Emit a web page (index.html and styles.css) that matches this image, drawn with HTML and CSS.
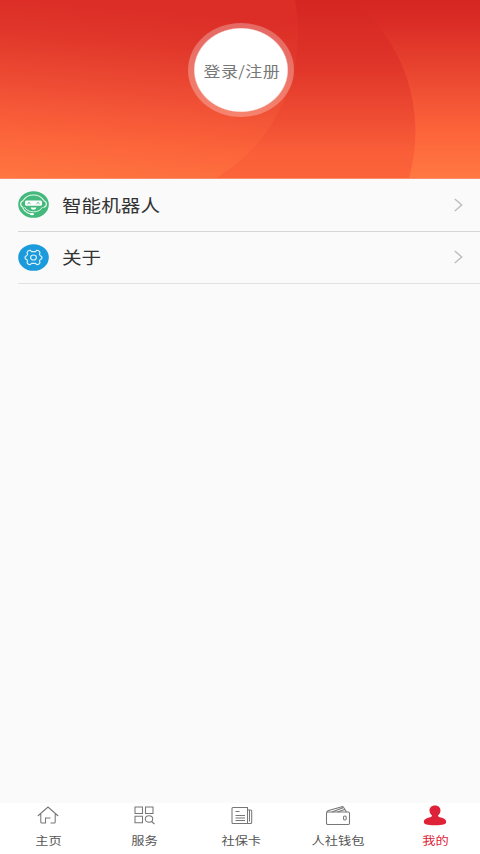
FILE: index.html
```html
<!DOCTYPE html>
<html lang="zh-CN">
<head>
<meta charset="utf-8">
<title>我的</title>
<link rel="stylesheet" href="styles.css">
</head>
<body>
<header class="banner">
  <svg class="waves" viewBox="0 0 480 178" preserveAspectRatio="none" aria-hidden="true">
    <defs>
      <linearGradient id="base" gradientUnits="userSpaceOnUse" x1="0" y1="0" x2="0" y2="178"><stop offset="0" stop-color="#d52622"/><stop offset=".12" stop-color="#da2b25"/><stop offset=".45" stop-color="#ec4a32"/><stop offset=".75" stop-color="#fd653a"/><stop offset="1" stop-color="#ff7842"/></linearGradient>
      <linearGradient id="mid" gradientUnits="userSpaceOnUse" x1="0" y1="0" x2="0" y2="178"><stop offset="0" stop-color="#d52622"/><stop offset=".35" stop-color="#df3429"/><stop offset=".7" stop-color="#f15034"/><stop offset=".85" stop-color="#f95e38"/><stop offset="1" stop-color="#fc643a"/></linearGradient>
      <linearGradient id="left" gradientUnits="userSpaceOnUse" x1="14" y1="0" x2="0" y2="178"><stop offset="0" stop-color="#dc2e27"/><stop offset=".2" stop-color="#e1382b"/><stop offset=".5" stop-color="#f05035"/><stop offset=".75" stop-color="#fc643a"/><stop offset="1" stop-color="#ff7641"/></linearGradient>
    </defs>
    <path fill="url(#base)" d="M0 0h480v178H0z"/>
    <path fill="url(#mid)" d="M0 0H353A165 168 0 0 1 409 178H0z"/>
    <path fill="url(#left)" d="M0 0H295A165 168 0 0 1 216 178H0z"/>
  </svg>
  <a class="avatar"><span class="avatar-text">登录/注册</span></a>
</header>
<main class="menu">
  <a class="row">
    <svg class="badge" viewBox="0 0 31 27" aria-hidden="true">
      <ellipse cx="15.5" cy="13.5" rx="15.3" ry="13.3" fill="#43b97c"/>
      <g fill="none" stroke="#e9f8ef" stroke-width="1.2">
        <path d="M5.2 9.5Q8.5 4 15.5 4t10.3 5.5"/>
        <path d="M5.5 9.5Q2.6 10.5 2.6 13t2.9 3.5M25.5 9.5q2.9 1 2.9 3.5t-2.9 3.5M4.8 17Q7.5 21.8 13 23"/>
        <path d="M6.5 16Q9 20.8 15.5 20.8T24.5 16" stroke-width=".9"/>
      </g>
      <rect x="7" y="9.5" width="17" height="5.2" rx="1.5" fill="#fff"/>
      <path d="M9.5 12.8l1.5-1.3 1.5 1.3M18.5 12.8l1.5-1.3 1.5 1.3" fill="none" stroke="#43b97c"/>
      <path d="M12.5 16.5h6Q17.8 18.8 15.5 18.8T12.5 16.5z" fill="#fff"/>
      <ellipse cx="14" cy="23.2" rx="2" ry="1.1" fill="#fff"/>
    </svg>
    <span class="label">智能机器人</span>
    <svg class="chevron" viewBox="0 0 9 14" aria-hidden="true"><path d="M.8 1 7.7 7 .8 13"/></svg>
  </a>
  <a class="row about">
    <svg class="badge" viewBox="0 0 31 27" aria-hidden="true">
      <ellipse cx="15.5" cy="13.5" rx="15.3" ry="13.3" fill="#1b9bdc"/>
      <g fill="none" stroke="#dff2fb" stroke-width="1.15" stroke-linejoin="round">
        <path d="M10.2 6.8 12.2 6.200 13.5 7.600h4l1.300-1.400 2 .6 1.200 1.800-.6 1.700.9 1.400 1.500.7v2.400l-1.500.7-.9 1.400.6 1.700-1.200 1.500-2 .6L17.500 19.300h-4l-1.300 1.400-2-.6L9 18.600l.6-1.700-.9-1.400-1.500-.7v-2.400l1.500-.7.9-1.400L9 8.600z"/>
        <ellipse cx="15.500" cy="13.500" rx="2.900" ry="2.500"/>
      </g>
    </svg>
    <span class="label">关于</span>
    <svg class="chevron" viewBox="0 0 9 14" aria-hidden="true"><path d="M.8 1 7.7 7 .8 13"/></svg>
  </a>
</main>
<nav class="tabs">
  <a class="tab">
    <svg class="icon" viewBox="0 0 26 22" aria-hidden="true"><path d="M2.800 12 13 3l10.200 9M5.800 10v8q0 1 1 1h3.700v-5h5M15.500 19h3.700q1 0 1-1v-8"/></svg>
    <span class="tab-text">主页</span>
  </a>
  <a class="tab service">
    <svg class="icon" viewBox="0 0 26 22" aria-hidden="true"><path d="M3 3h7.500v6.500H3zM13.500 3H21v6.500h-7.500zM3 12.200h7.500v6.600H3z"/><ellipse cx="17" cy="15" rx="3.700" ry="3.200"/><path d="m19.500 17.500 3 2.500"/></svg>
    <span class="tab-text">服务</span>
  </a>
  <a class="tab">
    <svg class="icon" viewBox="0 0 26 22" aria-hidden="true"><path d="M4 3.500h14.500v16H4Q3 19.500 3 18.500v-14Q3 3.500 4 3.500zM18.500 6h3q1.200 0 1.200 1v11.500q0 1-1.200 1h-3.200M20.500 6v11.500M6.500 7.400h4M6.500 11.500h9.500M6.500 14h9.500M6.500 16.500h9.500"/></svg>
    <span class="tab-text">社保卡</span>
  </a>
  <a class="tab">
    <svg class="icon" viewBox="0 0 26 22" aria-hidden="true"><rect x="1.500" y="8" width="23" height="12.500" rx="1.200"/><path d="M1.700 8.500Q1.800 7.200 3.500 6.500L17 2.700q1-.3 1.500.6L21.500 8M7 8l11-4.300M12.500 8 19.500 5.500"/><rect x="18.500" y="12" width="2.700" height="4" rx="1.200"/></svg>
    <span class="tab-text">人社钱包</span>
  </a>
  <a class="tab active">
    <svg class="icon" viewBox="0 0 26 22" aria-hidden="true"><path d="M13 1.500c3.500 0 5.500 2.300 5.500 5 0 2.300-1.200 4-2.500 5 0 1.300 1 1.600 3 2.100 3.300.8 5.200 2.200 5.200 4.300 0 2.200-3.200 3.300-11.200 3.300S1.800 20.100 1.800 17.900c0-2.100 1.900-3.500 5.200-4.300 2-.5 3-.8 3-2.100-1.300-1-2.500-2.700-2.500-5 0-2.700 2-5 5.500-5z"/></svg>
    <span class="tab-text">我的</span>
  </a>
</nav>
</body>
</html>
```
FILE: styles.css
```css
* { box-sizing: border-box; }
body {
  margin: 0;
  height: 854px;
  display: flex;
  flex-direction: column;
  overflow: hidden;
  background: #fafafa;
  color: #333;
  font-family: "Noto Sans CJK SC", sans-serif;
}
.banner {
  position: relative;
  flex: none;
  height: 179px;
  padding: 23px 0 0 2px;
  display: flex;
  justify-content: center;
  align-items: flex-start;
  border-bottom: 1px solid #f88e6c;
}
.waves { position: absolute; inset: 0; width: 100%; height: 178px; }
.avatar {
  position: relative;
  width: 106px;
  height: 94px;
  padding: 2px 0 0 2px;
  display: flex;
  align-items: center;
  justify-content: center;
  border-radius: 50%;
  background: radial-gradient(ellipse 47px 42px at 53px 47px, #fff 98%, rgba(255,255,255,.28) 101%);
}
.avatar-text {
  font-size: 15px;
  line-height: 20px;
  color: #777;
  white-space: nowrap;
  letter-spacing: .35px;
  transform: scaleX(1.13);
}
.menu { flex: 1; padding-left: 18px; }
.row {
  height: 52.5px;
  display: flex;
  align-items: center;
  padding-right: 17px;
  border-bottom: 1px solid #d6d6d6;
}
.about { border-bottom-color: #e2e2e2; }
.badge { width: 31px; height: 27px; flex: none; }
.label {
  margin-left: 13px;
  font-size: 17.2px;
  line-height: 24px;
  transform: scaleX(1.14);
  transform-origin: left center;
}
.chevron { width: 9px; height: 14px; margin-left: auto; fill: none; stroke: #bdbdbd; stroke-width: 1.4; }
.tabs {
  flex: none;
  height: 51px;
  display: grid;
  grid-template-columns: 96px 97px 97px 96px 1fr;
  background: #fff;
}
.tab { display: flex; flex-direction: column; align-items: center; padding-top: 1px; color: #555; }
.icon { width: 26px; height: 22px; fill: none; stroke: #777; stroke-width: 1.05; }
.tab-text {
  margin-top: 5px;
  font-size: 11.5px;
  line-height: 18px;
  white-space: nowrap;
  transform: scaleX(1.15);
}
.active { color: #dc2638; padding-left: 4px; }
.active .icon { fill: #de2338; stroke: none; }
```
